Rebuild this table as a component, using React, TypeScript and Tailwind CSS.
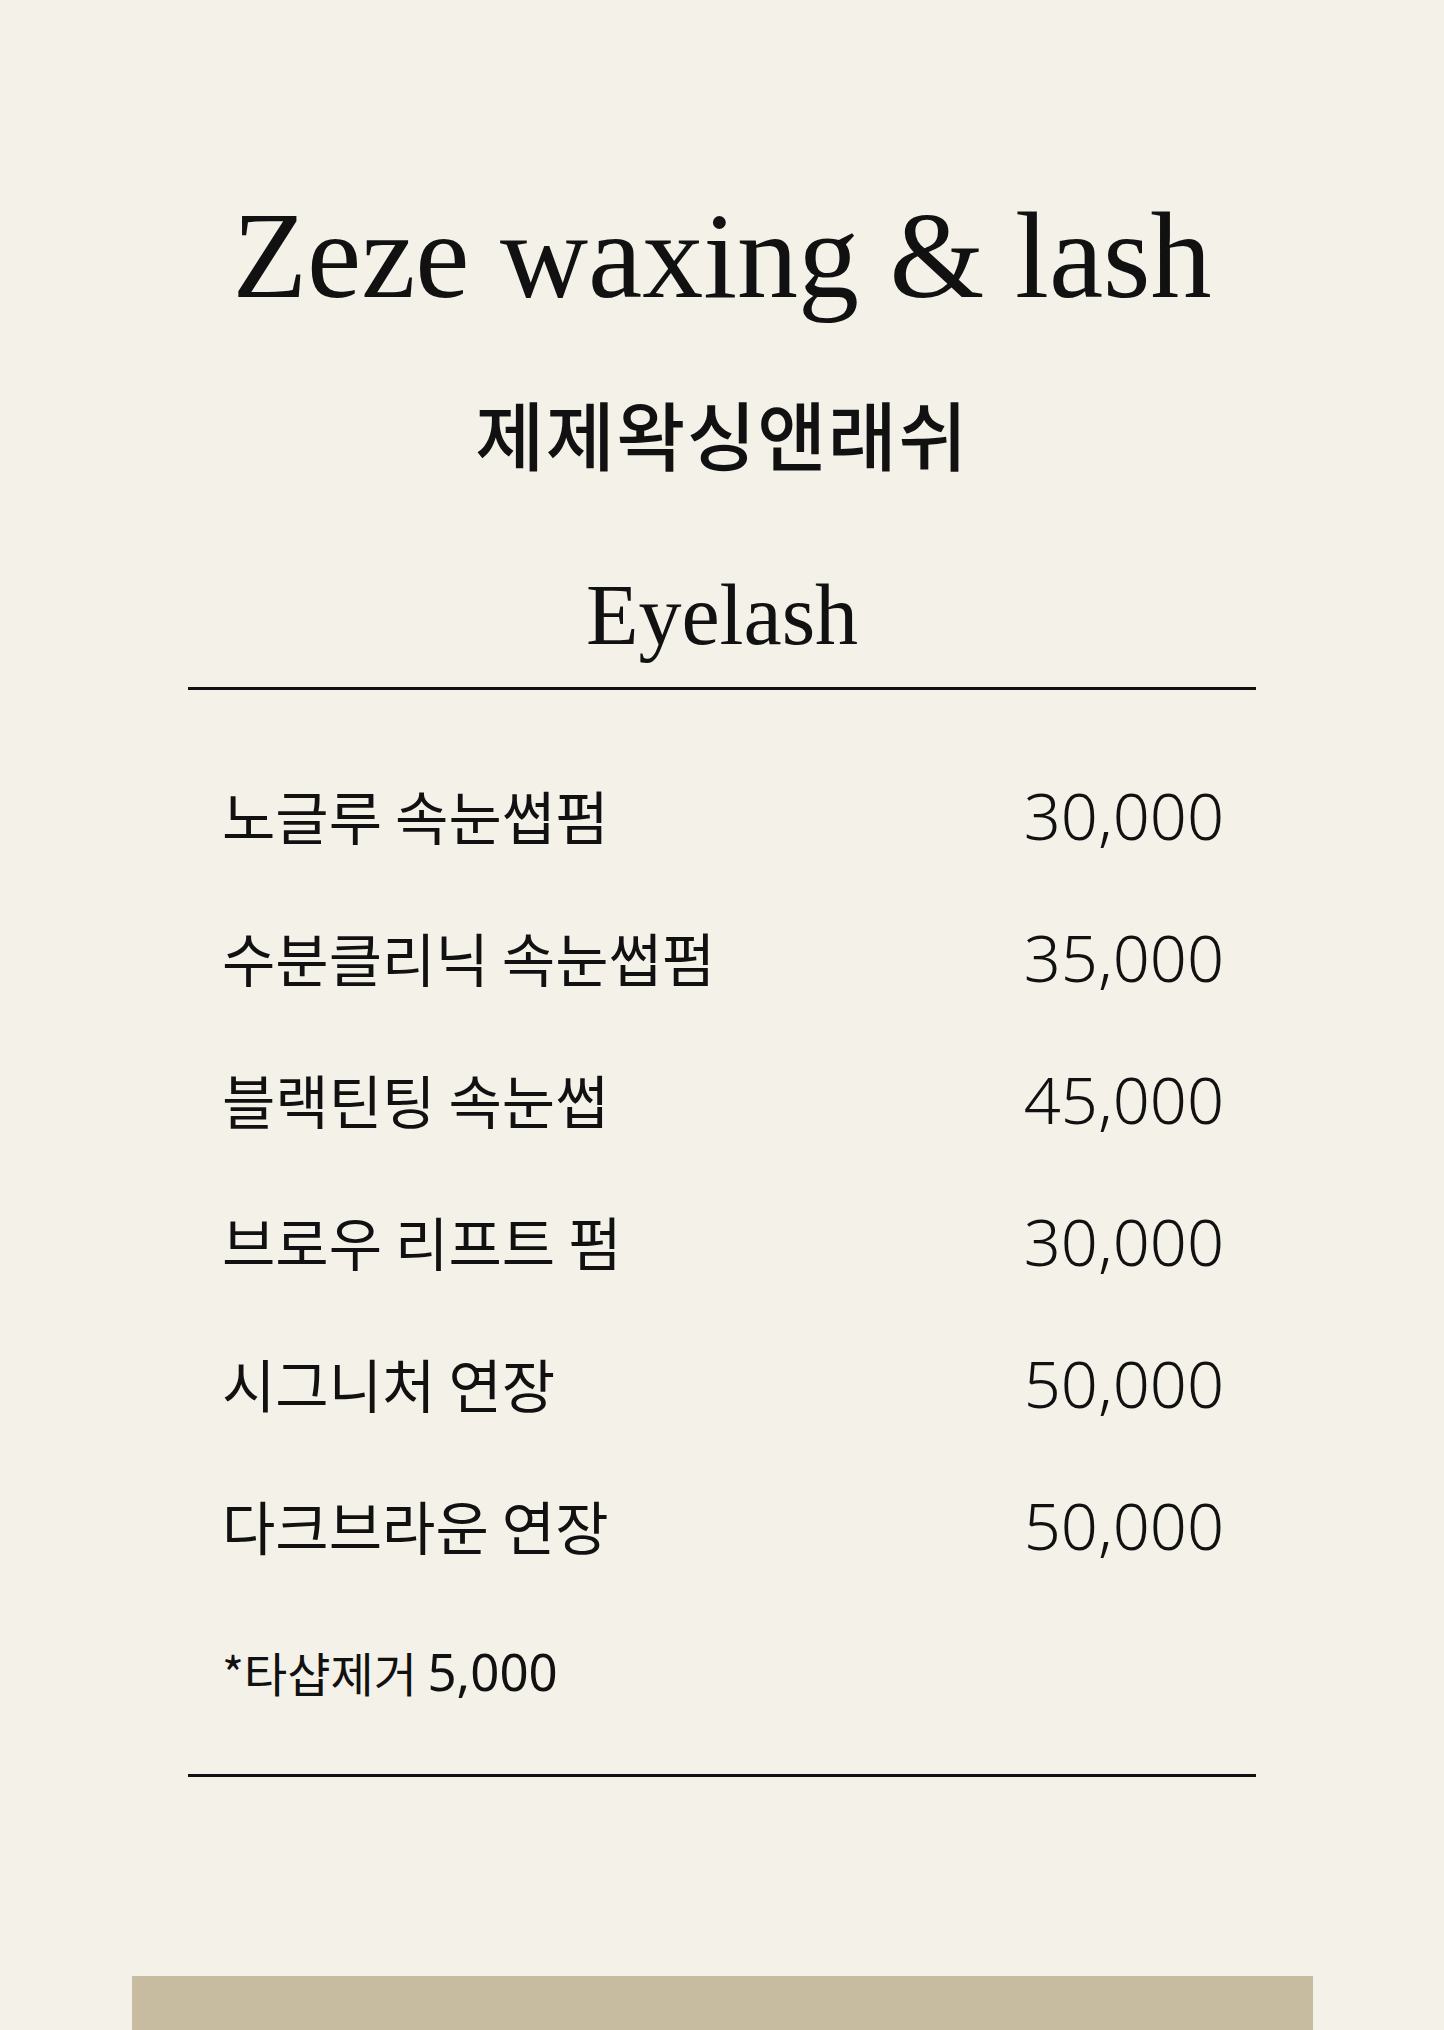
const items = [
  { name: "노글루 속눈썹펌", price: "30,000" },
  { name: "수분클리닉 속눈썹펌", price: "35,000" },
  { name: "블랙틴팅 속눈썹", price: "45,000" },
  { name: "브로우 리프트 펌", price: "30,000" },
  { name: "시그니처 연장", price: "50,000" },
  { name: "다크브라운 연장", price: "50,000" },
];

export default function App() {
  return (
    <div className="w-[1444px] h-[2030px] bg-[#f4f1e9] text-[#111] overflow-hidden flex flex-col items-center pt-[195px]">
      <h1 className="font-['Liberation_Serif',serif] text-[122px] leading-none">
        Zeze waxing &amp; lash
      </h1>
      <h2 className="mt-[78px] font-['Noto_Sans_CJK_KR',sans-serif] font-medium text-[75px] leading-none tracking-[0.02em]">
        제제왁싱앤래쉬
      </h2>
      <h3 className="mt-[102px] font-['Liberation_Serif',serif] text-[86px] leading-none">
        Eyelash
      </h3>
      <div className="mt-[29px] w-[1068px] h-[3px] shrink-0 bg-[#111]" />

      <ul className="mt-[54px] w-[1068px] pl-[34px] pr-[32px] font-['Noto_Sans_CJK_KR',sans-serif]">
        {items.map((item) => (
          <li key={item.name} className="h-[142px] flex items-center justify-between">
            <span className="text-[58px] leading-none">{item.name}</span>
            <span className="font-['Noto_Sans',sans-serif] font-light text-[65px] leading-none">
              {item.price}
            </span>
          </li>
        ))}
      </ul>

      <div className="mt-[51px] w-[1068px] h-[48px] px-[34px] flex items-center font-['Noto_Sans_CJK_KR',sans-serif] text-[47px] leading-none">
        *타샵제거&nbsp;<span className="font-['Noto_Sans',sans-serif] font-normal text-[51px]">5,000</span>
      </div>

      <div className="mt-[79px] w-[1068px] h-[3px] shrink-0 bg-[#111]" />

      <div className="mt-[199px] w-[1181px] h-[60px] bg-[#c7bc9f] shrink-0" />
    </div>
  );
}
